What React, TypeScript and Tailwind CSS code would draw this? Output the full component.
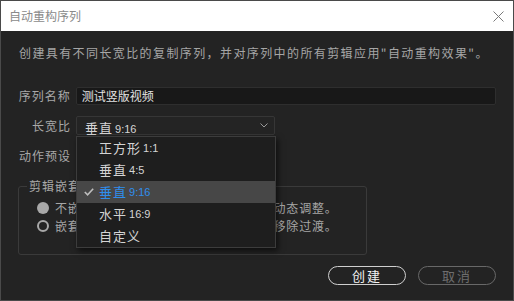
import React from 'react';

const cjk = "font-['Noto_Sans_CJK_SC','Noto_Sans',sans-serif]";

const options = [
  { name: '正方形', ratio: '1:1' },
  { name: '垂直', ratio: '4:5' },
  { name: '垂直', ratio: '9:16' },
  { name: '水平', ratio: '16:9' },
  { name: '自定义', ratio: '' },
];

const App = () => {
  const selected = 2;

  return (
    <div className={`w-[514px] h-[301px] flex flex-col bg-[#232323] border border-[#4a4a4a] ${cjk} overflow-hidden`}>
      {/* title bar */}
      <div className="h-[30px] shrink-0 bg-white flex items-center justify-between pl-[8px] pr-[9px]">
        <span className="text-[12px] text-[#8a8a8a]">自动重构序列</span>
        <svg width="11" height="11" viewBox="0 0 11 11" className="mt-px">
          <path d="M0.5 0.5 L10.5 10.5 M10.5 0.5 L0.5 10.5" stroke="#7a7a7a" strokeWidth="1" />
        </svg>
      </div>

      <div className="flex-1 flex flex-col px-[17px]">
        <p className="mt-[14px] text-[12px] leading-[16px] tracking-[1.4px] text-[#a6a6a6] pl-px whitespace-nowrap">
          创建具有不同长宽比的复制序列，并对序列中的所有剪辑应用"自动重构效果"。
        </p>

        <div className="mt-[26px] flex items-center">
          <label className="w-[53px] text-right text-[12px] tracking-[1px] text-[#a8a8a8]">序列名称</label>
          <div className="ml-[5px] w-[422px] h-[18px] bg-[#181818] border border-[#2e2e2e] rounded-[2px] flex items-center px-[5px] text-[12px] text-[#e2e2e2]">
            测试竖版视频
          </div>
        </div>

        <div className="mt-[11px] flex items-center relative z-10">
          <label className="w-[53px] text-right text-[12px] tracking-[1px] text-[#a8a8a8]">长宽比</label>
          <div className="ml-[5px] relative">
            <div className="w-[199px] h-[19px] bg-[#242424] border border-[#363636] rounded-[2px] flex items-center justify-between pl-[8px] pr-[6px]">
              <span className="text-[#d6d6d6]">
                <span className="text-[13px] tracking-[1px]">垂直</span>
                <span className="text-[11px] font-['Liberation_Sans',sans-serif] ml-[2px]">9:16</span>
              </span>
              <svg width="8" height="5" viewBox="0 0 8 5">
                <path d="M0.5 0.5 L4 4 L7.5 0.5" stroke="#9a9a9a" strokeWidth="1" fill="none" />
              </svg>
            </div>

            {/* open dropdown list */}
            <div className="absolute left-0 top-full mt-px w-[200px] bg-[#1e1e1e] border border-[#3c3c3c] shadow-[2px_3px_6px_rgba(0,0,0,0.6)] flex flex-col">
              {options.map((o, i) => (
                <div
                  key={i}
                  className={`h-[22px] flex items-center ${i === selected ? 'bg-[#474747] text-[#2f8eed]' : 'text-[#d4d4d4]'}`}
                >
                  <span className="w-[22px] flex justify-center pl-px">
                    {i === selected && (
                      <svg width="10" height="8" viewBox="0 0 10 8">
                        <path d="M0.8 4 L3.6 6.8 L9.2 0.8" stroke="#bdbdbd" strokeWidth="1.6" fill="none" />
                      </svg>
                    )}
                  </span>
                  <span className="text-[13px] tracking-[1px]">{o.name}</span>
                  {o.ratio && (
                    <span className="text-[11px] font-['Liberation_Sans',sans-serif] ml-[2px]">{o.ratio}</span>
                  )}
                </div>
              ))}
            </div>
          </div>
        </div>

        <div className="mt-[11px] flex items-center">
          <label className="w-[53px] text-right text-[12px] tracking-[1px] text-[#a8a8a8]">动作预设</label>
          <div className="ml-[5px] w-[199px] h-[19px] bg-[#242424] border border-[#363636] rounded-[2px]" />
        </div>

        <fieldset className="mt-[12px] w-[349px] h-[78px] border border-[#3a3a3a] rounded-[3px] pl-[8px] pt-[4px]">
          <legend className="px-[2px] text-[12px] tracking-[1px] text-[#a8a8a8]">剪辑嵌套</legend>
          <div className="flex items-center h-[18px] pl-[10px]">
            <span className="w-[12px] h-[12px] rounded-full bg-[#a8a8a8]" />
            <span className="ml-[6px] text-[12px] tracking-[0.85px] text-[#a6a6a6] whitespace-nowrap">不嵌套剪辑，将对位置和缩放参数进行动态调整。</span>
          </div>
          <div className="flex items-center h-[18px] pl-[10px]">
            <span className="w-[12px] h-[12px] rounded-full border-2 border-[#a8a8a8]" />
            <span className="ml-[6px] text-[12px] tracking-[0.85px] text-[#a6a6a6] whitespace-nowrap">嵌套剪辑，嵌套剪辑中的转场效果将会移除过渡。</span>
          </div>
        </fieldset>

        <div className="mt-[11px] flex justify-end gap-[12px]">
          <button className="w-[78px] h-[19px] rounded-full border border-[#cfcfcf] text-[13px] tracking-[2px] leading-none text-[#f2f2f2]">
            创建
          </button>
          <button className="w-[78px] h-[19px] rounded-full border border-[#686868] text-[13px] tracking-[2px] leading-none text-[#6e6e6e]">
            取消
          </button>
        </div>
      </div>
    </div>
  );
};

export default App;
